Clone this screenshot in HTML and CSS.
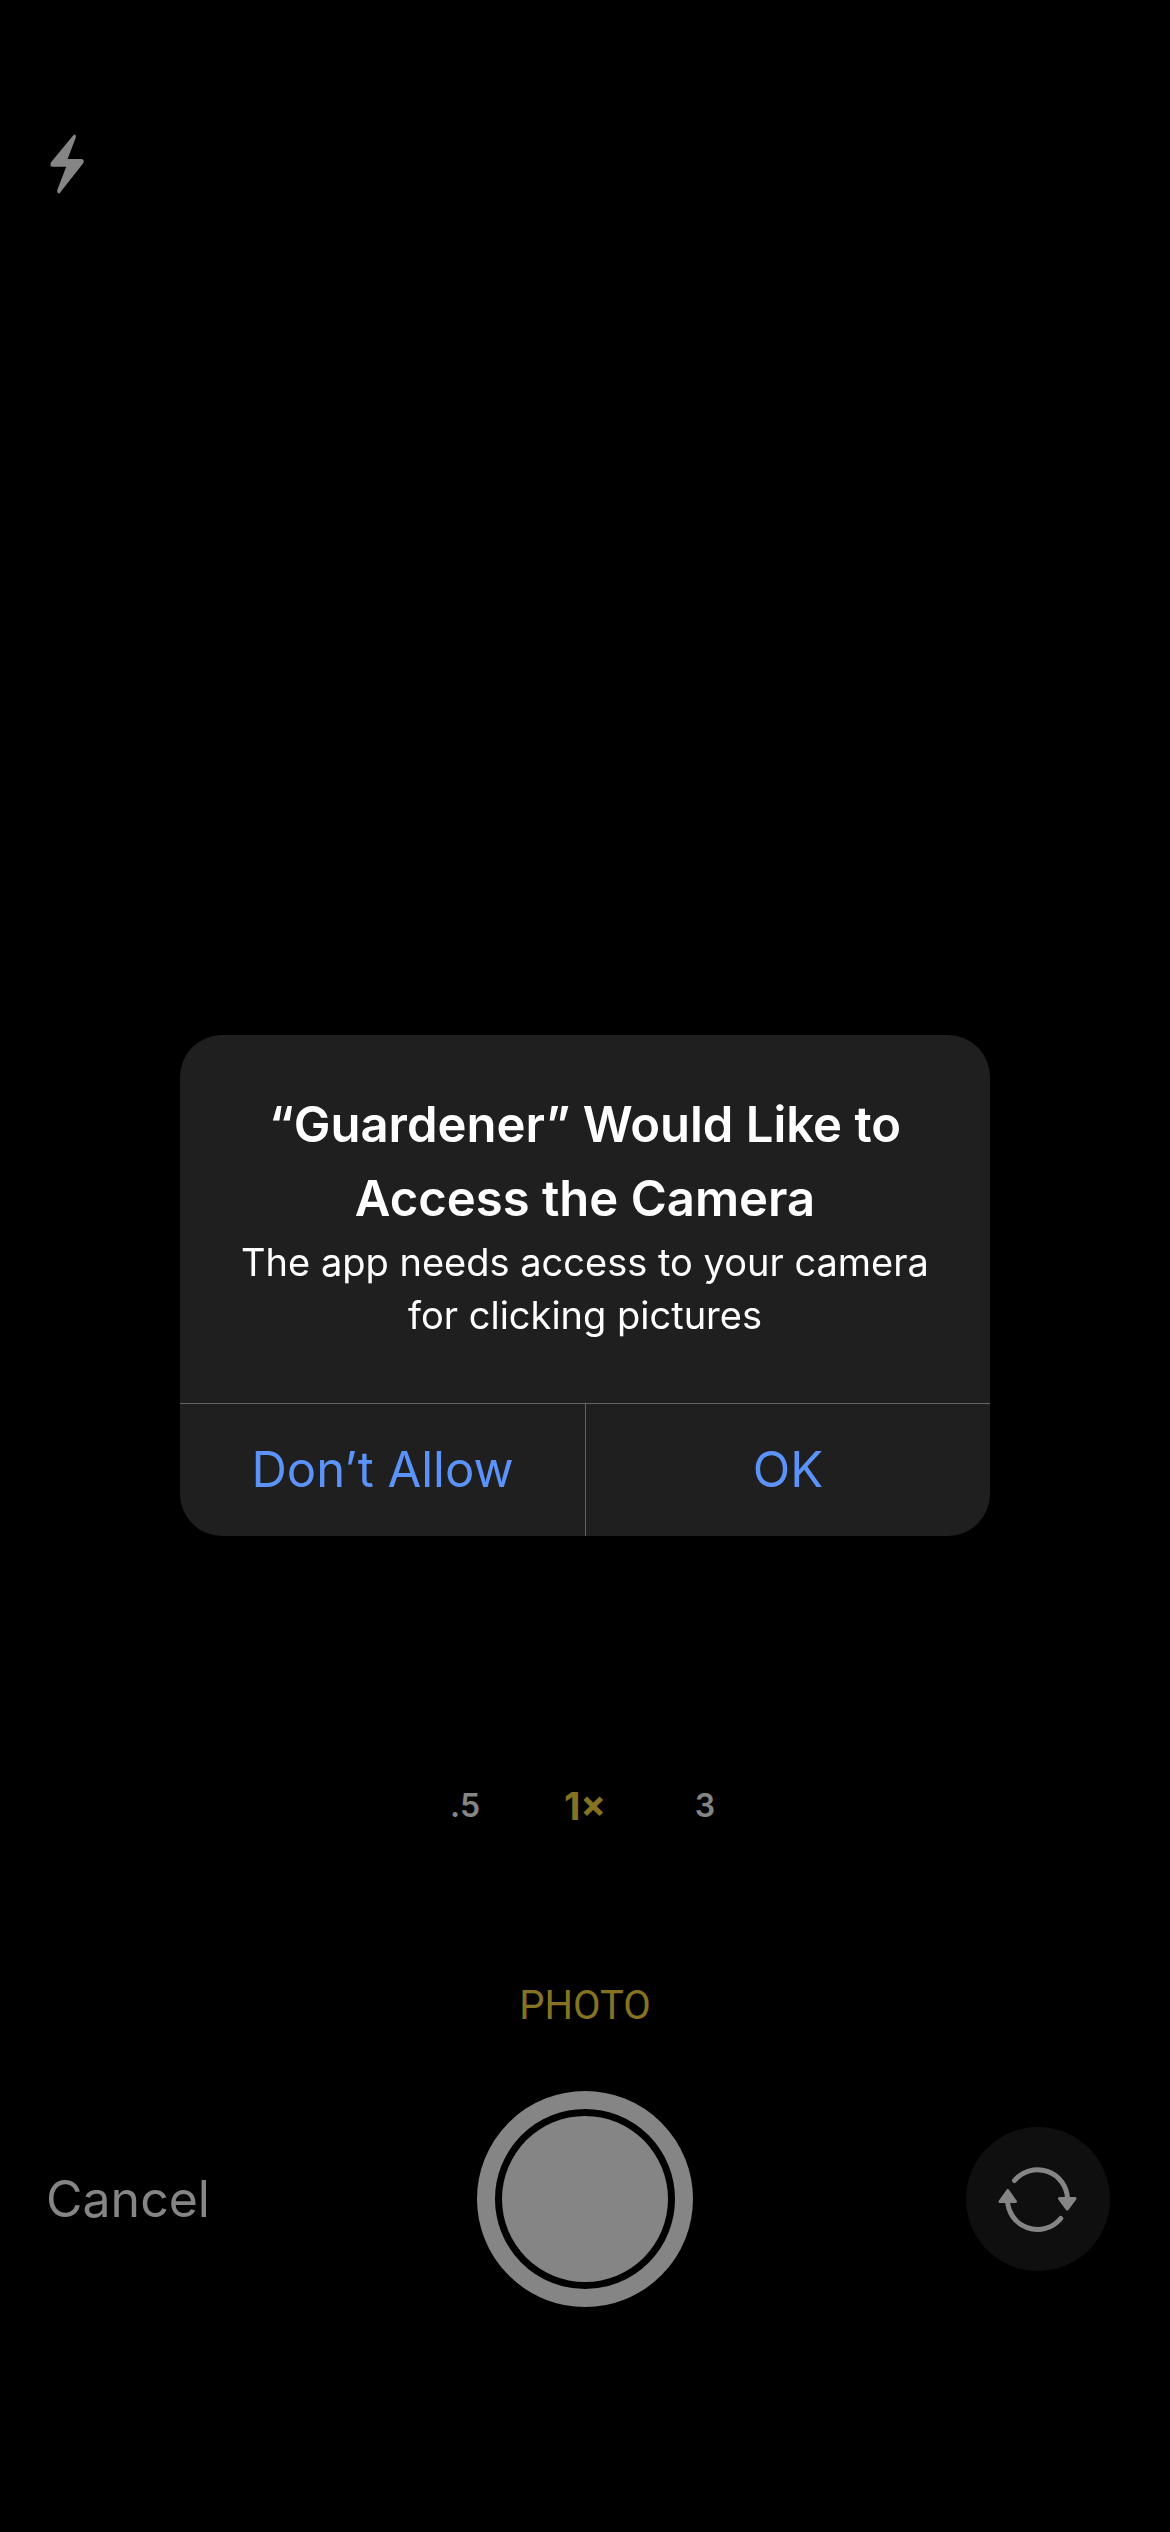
FILE: index.html
```html
<!DOCTYPE html>
<html lang="en">
<head>
<meta charset="utf-8">
<meta name="viewport" content="width=device-width, initial-scale=1">
<title>Camera</title>
<link rel="stylesheet" href="styles.css">
</head>
<body>
<main class="camera">
  <header class="top-bar">
    <button class="flash" type="button" aria-label="Flash">
      <svg class="flash-icon" viewBox="0 0 34 60" aria-hidden="true"><path d="M23.2 1.5 1 28.2Q-.8 32.8 2.5 32.8H16.2L7.2 56.2Q6.8 59.8 9.4 59.4L33 29.5Q35.200 25.200 31.200 25H17.600L25.800 3.500Q26.200-1 23.200 1.500Z"/></svg>
    </button>
  </header>
  <section class="controls">
    <div class="zoom">
      <button class="zoom-level" type="button">.5</button>
      <button class="zoom-level zoom-active" type="button">1×</button>
      <button class="zoom-level" type="button">3</button>
    </div>
    <p class="mode">PHOTO</p>
    <div class="actions">
      <button class="cancel" type="button">Cancel</button>
      <button class="shutter" type="button" aria-label="Take photo"><span class="shutter-core"></span></button>
      <button class="flip" type="button" aria-label="Switch camera">
        <svg class="flip-icon" viewBox="0 0 144 144" aria-hidden="true">
          <g class="flip-arc"><path d="M48.500 53.500A30 30 0 0 1 101.500 72"/><path d="M94.700 91.500A30 30 0 0 1 41.500 72"/></g>
          <g class="flip-head"><path d="M93.500 71.500H109L101.200 82Z"/><path d="M34 74.500H49.500L41.800 63.500Z"/></g>
        </svg>
      </button>
    </div>
  </section>
</main>
<div class="overlay">
  <section class="alert" role="alertdialog" aria-labelledby="alert-title" aria-describedby="alert-text">
    <div class="alert-body">
      <h1 class="alert-title" id="alert-title">“Guardener” Would Like to Access the Camera</h1>
      <p class="alert-text" id="alert-text">The app needs access to your camera for clicking pictures</p>
    </div>
    <div class="alert-buttons">
      <button class="alert-button" type="button">Don’t Allow</button>
      <button class="alert-button" type="button">OK</button>
    </div>
  </section>
</div>
</body>
</html>
```

FILE: styles.css
```css
* {
  box-sizing: border-box;
}

body {
  margin: 0;
  background: #000;
  color: #858585;
  font-family: Inter, "Liberation Sans", sans-serif;
}

button {
  padding: 0;
  border: 0;
  background: none;
  color: inherit;
  font: inherit;
}

h1,
p {
  margin: 0;
}

.camera {
  display: flex;
  flex-direction: column;
  justify-content: space-between;
  min-height: 100vh;
  padding: 134px 0 225px;
}

.top-bar {
  display: flex;
  padding: 0 50px;
}

.flash-icon {
  display: block;
  width: 34px;
  height: 60px;
  fill: #858585;
}

.zoom {
  display: flex;
  justify-content: center;
}

.zoom-level {
  width: 120px;
  font-size: 32px;
  line-height: 60px;
  font-weight: 600;
}

.zoom-active {
  color: #857223;
  font-size: 38px;
  font-weight: 700;
}

.mode {
  padding: 140px 0 55px;
  color: #857223;
  font-family: Roboto, sans-serif;
  font-size: 40px;
  line-height: 60px;
  text-align: center;
}

.actions {
  display: grid;
  grid-template-columns: 1fr auto 1fr;
  align-items: center;
  padding: 0 46px;
}

.cancel {
  justify-self: start;
  font-size: 50px;
  line-height: 72px;
}

.shutter {
  display: grid;
  place-items: center;
  width: 216px;
  height: 216px;
  border: 18px solid #858585;
  border-radius: 50%;
}

.shutter-core {
  width: 166px;
  height: 166px;
  border-radius: 50%;
  background: #858585;
}

.flip {
  justify-self: end;
  width: 144px;
  height: 144px;
  margin-right: 14px;
  border-radius: 50%;
  background: #0f0f0f;
}

.flip-icon {
  display: block;
  width: 100%;
}

.flip-arc {
  fill: none;
  stroke: #858585;
  stroke-width: 5;
  stroke-linecap: round;
}

.flip-head {
  fill: #858585;
  stroke: #858585;
  stroke-width: 3;
  stroke-linejoin: round;
}

.overlay {
  position: fixed;
  inset: 0;
  display: grid;
  place-items: center;
  padding: 39px 24px 0;
}

.alert {
  width: 100%;
  max-width: 810px;
  overflow: hidden;
  border-radius: 42px;
  background: #1f1f1f;
}

.alert-body {
  padding: 53px 48px 61px;
  color: #fff;
  text-align: center;
}

.alert-title {
  font-size: 49px;
  line-height: 74px;
  font-weight: 600;
}

.alert-text {
  font-size: 38px;
  line-height: 53px;
}

.alert-buttons {
  display: grid;
  grid-template-columns: 1fr 1fr;
  border-top: 1px solid #636363;
}

.alert-button {
  color: #5b93f9;
  font-size: 49px;
  line-height: 132px;
}

.alert-button + .alert-button {
  border-left: 1px solid #636363;
}
```
